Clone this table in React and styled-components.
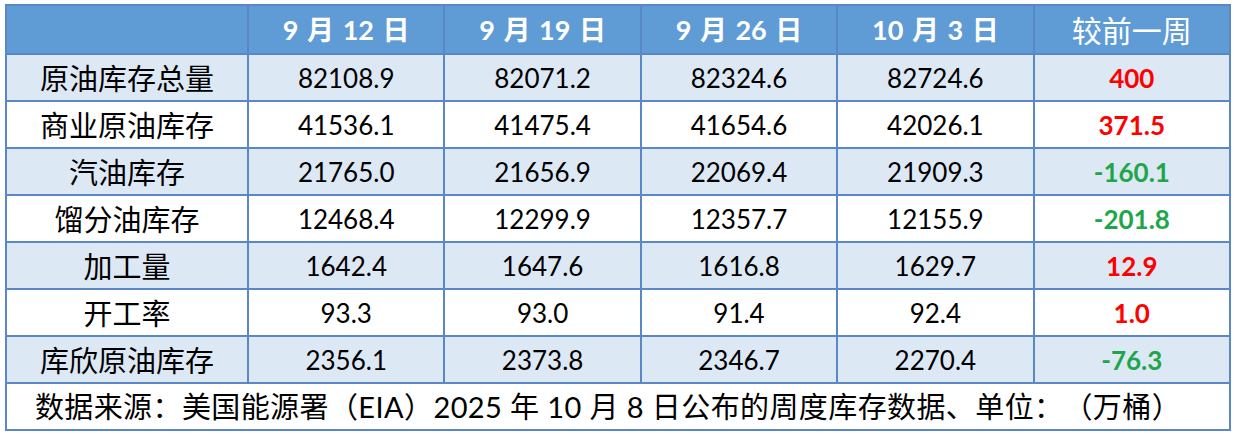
import React from "react";
import styled, { createGlobalStyle } from "styled-components";

const Global = createGlobalStyle`
  html, body { margin: 0; padding: 0; background: #ffffff; }
  body {
    font-family: "Lato", "Noto Sans CJK SC", sans-serif;
    text-spacing-trim: space-all;
  }
`;

const Page = styled.div`
  padding: 4px 0 0 5px;
`;

const Grid = styled.div`
  width: 1226px;
  box-sizing: border-box;
  display: grid;
  grid-template-columns: 240px repeat(5, 1fr);
  grid-template-rows: 47px repeat(8, 45px);
  gap: 2px;
  padding: 2px;
  background: #5a88c6;
`;

const Row = styled.div`
  display: contents;
`;

const Cell = styled.div`
  display: flex;
  align-items: center;
  justify-content: center;
  background: ${(p) => (p.$shade ? "#dde8f5" : "#ffffff")};
  color: #000;
  font-size: 26px;
  line-height: 1;
  white-space: nowrap;
`;

const HeaderCell = styled(Cell)`
  background: #5f9bd5;
  color: #ffffff;
  font-family: "Lato", "Noto Sans CJK SC", sans-serif;
  font-weight: ${(p) => (p.$plain ? 400 : 700)};
  font-size: ${(p) => (p.$plain ? "30px" : "27px")};
  word-spacing: 2px;
`;

const LabelCell = styled(Cell)`
  font-family: "Noto Sans CJK SC", sans-serif;
  font-size: 29px;
`;

const ValueCell = styled(Cell)`
  font-family: "Lato", sans-serif;
`;

const ChangeCell = styled(Cell)`
  font-family: "Lato", sans-serif;
  font-weight: 700;
  color: ${(p) => (p.$up ? "#ff0000" : "#1ea64b")};
`;

const FooterCell = styled(Cell)`
  grid-column: 1 / -1;
  font-family: "Lato", "Noto Sans CJK SC", sans-serif;
  font-size: 29px;
  letter-spacing: 0.4px;
  text-spacing-trim: space-all;
  padding-right: 20px;
`;

const dates = ["9 月 12 日", "9 月 19 日", "9 月 26 日", "10 月 3 日"];

const rows = [
  ["原油库存总量", ["82108.9", "82071.2", "82324.6", "82724.6"], "400"],
  ["商业原油库存", ["41536.1", "41475.4", "41654.6", "42026.1"], "371.5"],
  ["汽油库存", ["21765.0", "21656.9", "22069.4", "21909.3"], "-160.1"],
  ["馏分油库存", ["12468.4", "12299.9", "12357.7", "12155.9"], "-201.8"],
  ["加工量", ["1642.4", "1647.6", "1616.8", "1629.7"], "12.9"],
  ["开工率", ["93.3", "93.0", "91.4", "92.4"], "1.0"],
  ["库欣原油库存", ["2356.1", "2373.8", "2346.7", "2270.4"], "-76.3"],
];

export default function App() {
  return (
    <Page>
      <Global />
      <Grid>
        <Row>
          <HeaderCell />
          {dates.map((d) => (
            <HeaderCell key={d}>{d}</HeaderCell>
          ))}
          <HeaderCell $plain>较前一周</HeaderCell>
        </Row>
        {rows.map(([label, values, change], i) => {
          const shade = i % 2 === 0;
          return (
            <Row key={label}>
              <LabelCell $shade={shade}>{label}</LabelCell>
              {values.map((v, j) => (
                <ValueCell key={j} $shade={shade}>
                  {v}
                </ValueCell>
              ))}
              <ChangeCell $shade={shade} $up={!change.startsWith("-")}>
                {change}
              </ChangeCell>
            </Row>
          );
        })}
        <FooterCell>
          数据来源：美国能源署（EIA）2025 年 10 月 8 日公布的周度库存数据、单位：（万桶）
        </FooterCell>
      </Grid>
    </Page>
  );
}
